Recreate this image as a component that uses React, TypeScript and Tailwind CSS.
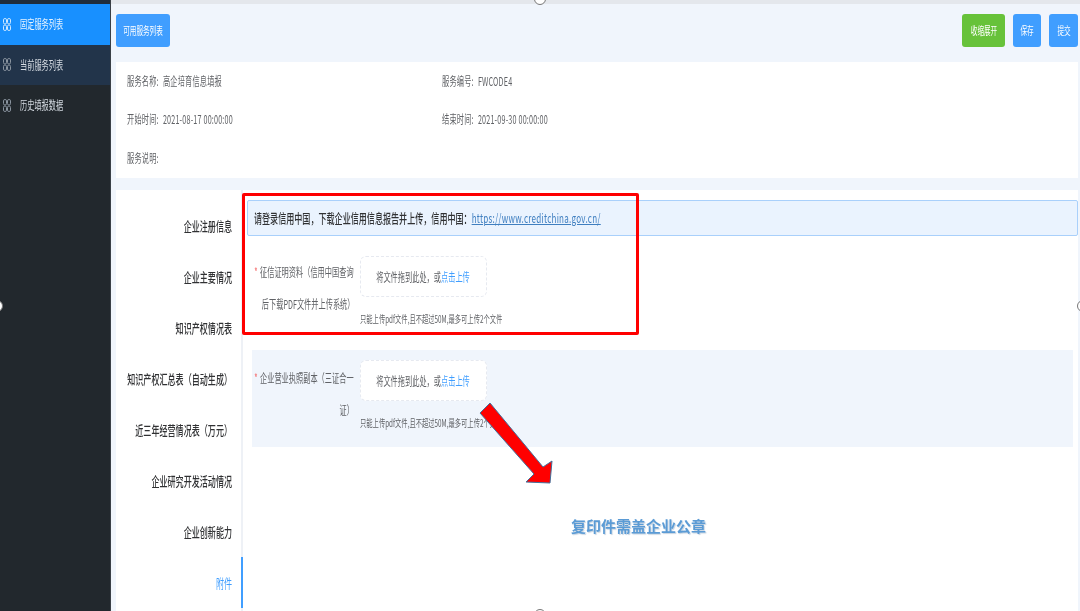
import React from 'react';

const font = { fontFamily: '"Noto Sans CJK SC", "Liberation Sans", sans-serif' };

function Sq({ children, className = '', scale = 'scale-x-[0.6]' }: { children: React.ReactNode; className?: string; scale?: string }) {
  return <span className={`inline-block whitespace-nowrap ${scale} ${className}`}>{children}</span>;
}

function MenuIcon({ color }: { color: string }) {
  return (
    <svg width="8" height="13" viewBox="0 0 8 13" fill="none" stroke={color} strokeWidth="1" className="shrink-0">
      <rect x="0.5" y="0.5" width="3" height="5.5" rx="1.4" />
      <rect x="4.5" y="0.5" width="3" height="5.5" rx="1.4" />
      <rect x="0.5" y="7" width="3" height="5.5" rx="1.4" />
      <rect x="4.5" y="7" width="3" height="5.5" rx="1.4" />
    </svg>
  );
}

function SideItem({ label, bg, text, icon }: { label: string; bg: string; text: string; icon: string }) {
  return (
    <div className={`h-[40.5px] flex items-center pl-[3px] ${bg} ${text}`}>
      <MenuIcon color={icon} />
      <Sq className="ml-[9px] origin-left text-[12px]">{label}</Sq>
    </div>
  );
}

function Btn({ label, color, width }: { label: string; color: string; width: string }) {
  return (
    <div className={`h-[33px] rounded-[3px] flex items-center justify-center text-white text-[11px] ${color} ${width}`}>
      <Sq className="origin-center">{label}</Sq>
    </div>
  );
}

function Info({ label, value }: { label: string; value?: string }) {
  return (
    <div className="h-[37px] flex items-center text-[12px] text-[#606266]">
      <Sq className="origin-left tracking-[0.3px]">
        {label} <span className="ml-1">{value}</span>
      </Sq>
    </div>
  );
}

function NavItem({ label, active }: { label: string; active?: boolean }) {
  return (
    <div
      className={`h-[51px] flex items-center justify-end pr-[9px] -mr-[2px] border-r-2 text-[13px] ${
        active ? 'border-[#409eff] text-[#409eff]' : 'border-transparent text-[#303133] font-medium'
      }`}
    >
      <Sq className="origin-right" scale="scale-x-[0.62]">{label}</Sq>
    </div>
  );
}

function UploadRow({ lines, bg, labelTop }: { lines: string[]; bg: string; labelTop: string }) {
  return (
    <div className={`mx-[5px] h-[97px] pt-[10px] flex ${bg}`}>
      <div className={`w-[108px] shrink-0 pr-[6px] text-[12px] text-[#606266] leading-[32px] ${labelTop}`}>
        {lines.map((line, i) => (
          <div key={i} className="flex justify-end">
            <Sq className="origin-right">
              {i === 0 && <span className="text-[#f56c6c] mr-1">*</span>}
              {line}
            </Sq>
          </div>
        ))}
      </div>
      <div>
        <div className="w-[127px] h-[41px] bg-white border border-dashed border-[#e6e9f0] rounded-md flex items-center justify-center text-[12px] text-[#606266]">
          <Sq className="origin-center">
            {'将文件拖到此处\uFF0C或'}<span className="text-[#409eff]">点击上传</span>
          </Sq>
        </div>
        <div className="mt-[16px] h-3 leading-3 text-[10.5px] text-[#606266]">
          <Sq className="origin-left">只能上传pdf文件,且不超过50M,最多可上传2个文件</Sq>
        </div>
      </div>
    </div>
  );
}

export default function App() {
  return (
    <div className="relative w-[1080px] h-[611px] flex overflow-hidden bg-[#f0f5fc] blur-[0.5px]" style={font}>
      <div className="w-[111px] shrink-0 bg-[#22282d] border-r border-[#3a4047]">
        <div className="h-1 bg-[#1f2d3d]" />
        <SideItem label="固定服务列表" bg="bg-[#1890ff]" text="text-[#e6f3ff]" icon="#cfe8ff" />
        <SideItem label="当前服务列表" bg="bg-[#22344a]" text="text-[#d5dbe2]" icon="#8a949f" />
        <SideItem label="历史填报数据" bg="bg-[#22282d]" text="text-[#d5dbe2]" icon="#8a949f" />
      </div>

      <div className="flex-1 flex flex-col pl-[5px] pr-[2px] min-w-0">
        <div className="h-1 -ml-[5px] -mr-[2px] bg-[#e4e7ec] shrink-0" />
        <div className="mt-[10px] mb-[15px] flex items-center shrink-0">
          <Btn label="可用服务列表" color="bg-[#409eff]" width="w-[54px]" />
          <div className="ml-auto flex gap-2">
            <Btn label="收缩展开" color="bg-[#67c23a]" width="w-[43px]" />
            <Btn label="保存" color="bg-[#409eff]" width="w-[28px]" />
            <Btn label="提交" color="bg-[#409eff]" width="w-[29px]" />
          </div>
        </div>

        <div className="h-[116px] bg-white pl-[11px] grid grid-cols-[315px_1fr] shrink-0">
          <Info label="服务名称:" value="高企培育信息填报" />
          <Info label="服务编号:" value="FWCODE4" />
          <Info label="开始时间:" value="2021-08-17 00:00:00" />
          <Info label="结束时间:" value="2021-09-30 00:00:00" />
          <Info label="服务说明:" />
        </div>

        <div className="mt-3 flex-1 bg-white flex min-h-0">
          <div className="w-[127px] shrink-0 pt-[10px] border-r-2 border-[#eef1f6]">
            <NavItem label="企业注册信息" />
            <NavItem label="企业主要情况" />
            <NavItem label="知识产权情况表" />
            <NavItem label={'知识产权汇总表\uFF08自动生成\uFF09'} />
            <NavItem label={'近三年经营情况表\uFF08万元\uFF09'} />
            <NavItem label="企业研究开发活动情况" />
            <NavItem label="企业创新能力" />
            <NavItem label="附件" active />
          </div>

          <div className="flex-1 min-w-0 pt-[10px] pl-[4px]">
            <div className="h-[36px] bg-[#eaf3fe] border border-[#a9d0fb] rounded-[2px] pl-[6px] flex items-center text-[13px] font-medium text-[#303133]">
              <Sq className="origin-left" scale="scale-x-[0.62]">
                {'请登录信用中国\uFF0C下载企业信用信息报告并上传\uFF0C信用中国\uFF1A'}
                <span className="font-normal text-[#3f7fc0] underline tracking-[0.4px]">https://www.creditchina.gov.cn/</span>
              </Sq>
            </div>
            <div className="mt-[10px] mb-[7px]">
              <UploadRow lines={['征信证明资料\uFF08信用中国查询', '后下载PDF文件并上传系统\uFF09']} bg="bg-white" labelTop="" />
            </div>
            <UploadRow lines={['企业营业执照副本\uFF08三证合一', '证\uFF09']} bg="bg-[#f0f5fc]" labelTop="pt-[2px]" />
            <div className="mt-[68px] ml-[324px] text-[15px] leading-[22px] font-bold text-[#5b9bd5] whitespace-nowrap [text-shadow:1px_1px_1px_#c8d4e0]">
              复印件需盖企业公章
            </div>
          </div>
        </div>
      </div>

      {/* annotations drawn over the page */}
      <div className="absolute left-[242px] top-[193px] w-[397px] h-[142px] border-[3px] border-[#ff0000] rounded-[2px]" />
      <svg className="absolute left-[470px] top-[395px]" width="90" height="95" viewBox="470 395 90 95">
        <polygon
          points="490,403 543,467 552,461 550,483 526,482 534,474 480,413"
          fill="#ff0000"
          stroke="#41719c"
          strokeWidth="1"
        />
      </svg>

      {/* selection handles */}
      <div className="absolute left-[534px] -top-[7px] w-3 h-3 rounded-full bg-white border border-[#777]" />
      <div className="absolute left-[534px] -bottom-[10px] w-3 h-3 rounded-full bg-white border border-[#777]" />
      <div className="absolute -left-[9px] top-[300px] w-3 h-3 rounded-full bg-white border border-[#777]" />
      <div className="absolute -right-[9px] top-[300px] w-3 h-3 rounded-full bg-white border border-[#777]" />
    </div>
  );
}
